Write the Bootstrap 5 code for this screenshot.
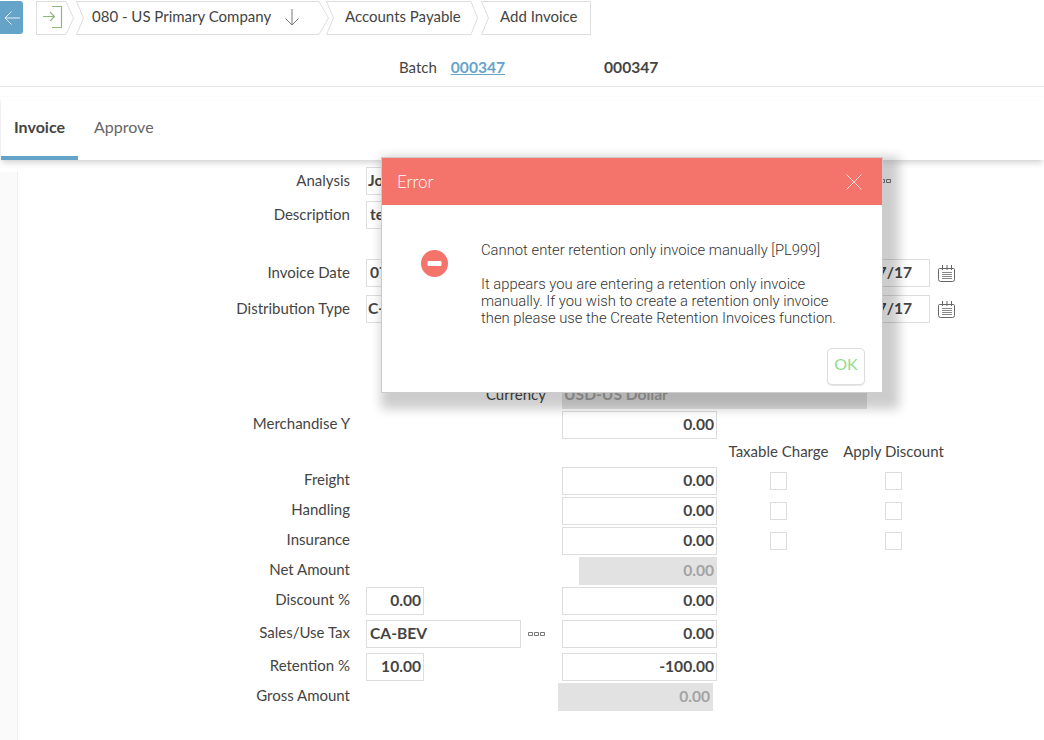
<!DOCTYPE html>
<html lang="en">
<head>
  <meta charset="UTF-8" />
  <meta name="viewport" content="width=device-width, initial-scale=1" />
  <title>Add Invoice</title>
  <link href="https://cdn.jsdelivr.net/npm/bootstrap@5.3.0/dist/css/bootstrap.min.css" rel="stylesheet">
  <style>
    html, body { height: 740px; overflow: hidden; }
    body { background: #fff; color: #444; font-family: Lato, "Liberation Sans", sans-serif; font-size: 15px; position: relative; }

    .topbar { height: 35px; padding-top: 1px; }
    .back-btn { width: 23px; height: 33px; background: #66a3c9; border-radius: 0 3px 3px 0; margin-right: 13px; }
    .crumb { position: relative; height: 34px; line-height: 31px; white-space: nowrap; }
    .crumb svg.shape { position: absolute; left: 0; top: 0; }
    .crumb span, .crumb svg.ico { position: relative; }
    .crumb-home { width: 38px; }
    .crumb-co { width: 253px; margin-left: 2px; padding-left: 16px; }
    .crumb-ap { width: 152px; margin-left: -3px; padding-left: 19px; }
    .crumb-add { width: 110px; margin-left: 3px; padding-left: 19px; }
    .crumb-home svg.ico { display: block; left: 6px; top: 4px; }
    .crumb-co svg.ico { margin-left: 9px; top: -1px; vertical-align: middle; }

    .batch-row { height: 52px; padding: 20px 0 0 399px; border-bottom: 1px solid #e8e8e8; line-height: 24px; }
    .batch-link { margin-left: 14px; color: #66a3c9; font-weight: 700; font-size: 15.6px; }
    .batch-val { margin-left: 99px; font-weight: 700; font-size: 15.6px; }

    .tab-panel { margin: 10px 0 0 1px; height: 63px; background: #fff; box-shadow: 0 4px 6px -1px rgba(0,0,0,.16), 0 0 2px rgba(0,0,0,.04); position: relative; font-size: 16px; }
    .tab-panel .nav-link { height: 63px; padding: 18px 16px 0; color: #666; border-bottom: 4px solid transparent; }
    .tab-panel .nav-link.active { color: #444; font-weight: 700; padding: 18px 13px 0; border-bottom-color: #66a3c9; }

    .rail { width: 18px; margin-top: 12px; height: 568px; background: #fafafa; border-right: 1px solid #eee; flex: none; }
    .form-area { padding-top: 7px; }

    .frow { display: grid; grid-template-columns: 332px 16px 196px 155px 123px 107px; height: 28px; margin-bottom: 2px; align-items: center; }
    .frow-date { grid-template-columns: 332px 16px 100px 364px 100px 8px 18px; }
    .after-6 { margin-bottom: 6px; }
    .after-30 { margin-bottom: 30px; }
    .after-8 { margin-bottom: 8px; }
    .after-58 { margin-bottom: 58px; }
    .after-0 { margin-bottom: 0; }
    .after-5 { margin-bottom: 5px; }

    .flabel { grid-column: 1; text-align: right; margin-top: -3px; }
    .flabel.upper { margin-top: -1px; }
    .fcell { grid-column: 3; display: flex; align-items: center; }
    .famt { grid-column: 4; display: flex; justify-content: flex-end; }
    .cur-amt { grid-column: 4 / span 3; display: flex; }
    .fchk { display: flex; justify-content: center; }
    .fhead { text-align: center; white-space: nowrap; margin-top: -3px; }
    .col-tax { grid-column: 5; }
    .col-disc { grid-column: 6; }

    .fld.form-control { height: 28px; min-height: 0; padding: 0 3px 2px; border: 1px solid #ddd; border-radius: 0; color: #444; font-size: 15.6px; font-weight: 700; box-shadow: none; background: #fff; }
    .fld.tight { padding-left: 1px; }
    .fld.num { text-align: right; padding-right: 2px; }
    .fld.ro { background: #e2e2e2; border-color: #e2e2e2; color: #a3a3a3; }
    .w-58 { width: 58px; }
    .w-155 { width: 155px; }
    .w-138 { width: 138px; }
    .w-100px { width: 100px; }
    .w-300 { width: 300px; }
    .w-501 { width: 501px; flex: none; }
    .w-305 { width: 305px; flex: none; }
    .fld.gross { margin-right: 4px; width: 155px; flex: none; }
    .analysis-cell { grid-column: 3 / span 4; }
    .dots { margin-left: 7px; flex: none; }
    .cur-label { grid-column: 1 / span 3; text-align: right; padding-right: 16px; margin-top: -1px; }
    .chkbox.form-check-input { width: 17px; height: 18px; margin: 0; border: 1px solid #ddd; border-radius: 0; box-shadow: none; }
    .date-end { padding: 0 17px 2px 0 !important; text-align: right; }

    .err-box { position: absolute; left: 381px; top: 157px; width: 502px; height: 236px; border: 1px solid #ccc; border-radius: 0; box-shadow: 8px 8px 10px 8px rgba(0,0,0,.2); display: flex; flex-direction: column; background: #fff; }
    .err-box .modal-header { height: 47px; flex: none; padding: 0 20px 0 15px; background: #f4736b; border: 0; border-radius: 0; color: #fff; font-size: 17px; font-weight: 300; }
    .err-body { flex: 1; padding: 37px 0 0 39px; }
    .err-text { margin-left: 33px; font-family: Roboto, "Liberation Sans", sans-serif; font-weight: 300; font-size: 14.8px; line-height: 17px; color: #333; white-space: nowrap; }
    .err-text p { margin: 0 0 17px; }
    .err-ok.btn { position: absolute; right: 17px; bottom: 7px; width: 38px; height: 37px; padding: 0 0 6px; border: 1px solid #ddd; border-radius: 5px; background: #fff; color: #8fdc8f; font-size: 16px; line-height: 28px; box-shadow: 0 1px 1px rgba(0,0,0,.1); }
    .err-ico { margin-top: 8px; flex: none; }
  </style>
</head>
<body>
  <div class="topbar d-flex">
    <div class="back-btn d-flex align-items-center justify-content-center">
      <svg width="18" height="16" viewBox="0 0 18 16" fill="none" stroke="#fff" stroke-opacity=".85" stroke-width="1"><path d="M17 8H2M8.5 1.5 2 8l6.5 6.5"/></svg>
    </div>
    <div class="crumb crumb-home">
      <svg class="shape" width="38" height="34" fill="#fff" stroke="#ddd"><path d="M.5.5H30L37.5 17 30 33.5H.5Z"/></svg>
      <svg class="ico" width="24" height="24" fill="none" stroke="#8fb87f" stroke-width="1.2"><path d="M1 11.5H12M8 7l4.5 4.5L8 16M10 1.5H19.5V22.5H10" /></svg>
    </div>
    <div class="crumb crumb-co">
      <svg class="shape" width="253" height="34" fill="#fff" stroke="#ddd"><path d="M.5.5H243L252.5 17 243 33.5H.5L7.5 17Z"/></svg>
      <span>080 - US Primary Company</span>
      <svg class="ico" width="16" height="18" fill="none" stroke="#777" stroke-width="1"><path d="M8 1V17M1.5 10.5 8 17l6.5-6.5"/></svg>
    </div>
    <div class="crumb crumb-ap">
      <svg class="shape" width="152" height="34" fill="#fff" stroke="#ddd"><path d="M.5.5H145L151.5 17 145 33.5H.5L7.5 17Z"/></svg>
      <span>Accounts Payable</span>
    </div>
    <div class="crumb crumb-add">
      <svg class="shape" width="110" height="34" fill="#fff" stroke="#ddd"><path d="M.5.5H109.5V33.5H.5L7.5 17Z"/></svg>
      <span>Add Invoice</span>
    </div>
  </div>

  <div class="batch-row">
    <span>Batch</span><a href="#" class="batch-link">000347</a><span class="batch-val">000347</span>
  </div>

  <div class="tab-panel">
    <ul class="nav">
      <li class="nav-item"><a class="nav-link active" href="#">Invoice</a></li>
      <li class="nav-item"><a class="nav-link" href="#">Approve</a></li>
    </ul>
  </div>

  <div class="d-flex">
    <div class="rail"></div>
    <div class="form-area flex-grow-1">
      <div class="frow after-6">
        <div class="flabel upper">Analysis</div>
        <div class="fcell analysis-cell">
          <input class="form-control fld tight w-501" value="Job">
          <svg class="dots" width="18" height="6" fill="none" stroke="#777"><path d="M.5 1.5h4v3h-4zM6.5 1.5h4v3h-4zM12.5 1.5h4v3h-4z"/></svg>
        </div>
      </div>
      <div class="frow after-30">
        <div class="flabel upper">Description</div>
        <div class="fcell analysis-cell"><input class="form-control fld w-300" value="test"></div>
      </div>
      <div class="frow frow-date after-8">
        <div class="flabel upper">Invoice Date</div>
        <div class="fcell"><input class="form-control fld w-100px" value="07/07/17"></div>
        <div></div>
        <input class="form-control fld date-end" value="07/07/17">
        <div></div>
        <svg width="18" height="18" viewBox="0 0 18 18" fill="none" stroke="#666"><path d="M1.5 4.5h14a1 1 0 0 1 1 1v10a2 2 0 0 1-2 2h-12a2 2 0 0 1-2-2v-10a1 1 0 0 1 1-1zM4.5 1v5M9 1v5M13.5 1v5"/><path d="M4 8.5h10M4 10.5h10M4 12.5h10M4 14.5h10" stroke="#888"/></svg>
      </div>
      <div class="frow frow-date after-58">
        <div class="flabel upper">Distribution Type</div>
        <div class="fcell"><input class="form-control fld tight w-100px" value="C-Net"></div>
        <div></div>
        <input class="form-control fld date-end" value="07/07/17">
        <div></div>
        <svg width="18" height="18" viewBox="0 0 18 18" fill="none" stroke="#666"><path d="M1.5 4.5h14a1 1 0 0 1 1 1v10a2 2 0 0 1-2 2h-12a2 2 0 0 1-2-2v-10a1 1 0 0 1 1-1zM4.5 1v5M9 1v5M13.5 1v5"/><path d="M4 8.5h10M4 10.5h10M4 12.5h10M4 14.5h10" stroke="#888"/></svg>
      </div>
      <div class="frow">
        <div class="cur-label">Currency</div>
        <div class="cur-amt"><input class="form-control fld ro tight w-305" value="USD-US Dollar" readonly></div>
      </div>
      <div class="frow after-0">
        <div class="flabel">Merchandise Y</div>
        <div class="famt"><input class="form-control fld num w-155" value="0.00"></div>
      </div>
      <div class="frow after-0">
        <div class="fhead col-tax">Taxable Charge</div>
        <div class="fhead col-disc">Apply Discount</div>
      </div>
      <div class="frow">
        <div class="flabel">Freight</div>
        <div class="famt"><input class="form-control fld num w-155" value="0.00"></div>
        <div class="fchk"><input class="form-check-input chkbox" type="checkbox"></div>
        <div class="fchk"><input class="form-check-input chkbox" type="checkbox"></div>
      </div>
      <div class="frow">
        <div class="flabel">Handling</div>
        <div class="famt"><input class="form-control fld num w-155" value="0.00"></div>
        <div class="fchk"><input class="form-check-input chkbox" type="checkbox"></div>
        <div class="fchk"><input class="form-check-input chkbox" type="checkbox"></div>
      </div>
      <div class="frow">
        <div class="flabel">Insurance</div>
        <div class="famt"><input class="form-control fld num w-155" value="0.00"></div>
        <div class="fchk"><input class="form-check-input chkbox" type="checkbox"></div>
        <div class="fchk"><input class="form-check-input chkbox" type="checkbox"></div>
      </div>
      <div class="frow">
        <div class="flabel">Net Amount</div>
        <div class="famt"><input class="form-control fld num ro w-138" value="0.00" readonly></div>
      </div>
      <div class="frow after-5">
        <div class="flabel">Discount %</div>
        <div class="fcell"><input class="form-control fld num w-58" value="0.00"></div>
        <div class="famt"><input class="form-control fld num w-155" value="0.00"></div>
      </div>
      <div class="frow after-5">
        <div class="flabel">Sales/Use Tax</div>
        <div class="fcell">
          <input class="form-control fld w-155 flex-shrink-0" value="CA-BEV">
          <svg class="dots" width="18" height="6" fill="none" stroke="#777"><path d="M.5 1.5h4v3h-4zM6.5 1.5h4v3h-4zM12.5 1.5h4v3h-4z"/></svg>
        </div>
        <div class="famt"><input class="form-control fld num w-155" value="0.00"></div>
      </div>
      <div class="frow">
        <div class="flabel">Retention %</div>
        <div class="fcell"><input class="form-control fld num w-58" value="10.00"></div>
        <div class="famt"><input class="form-control fld num w-155" value="-100.00"></div>
      </div>
      <div class="frow">
        <div class="flabel">Gross Amount</div>
        <div class="famt"><input class="form-control fld num ro gross" value="0.00" readonly></div>
      </div>
    </div>
  </div>

  <div class="err-box">
    <div class="modal-header d-flex justify-content-between align-items-center">
      <span>Error</span>
      <svg width="16" height="16" fill="none" stroke="#fff" stroke-opacity=".8" stroke-width="1"><path d="M.5.5l15 15M15.5.5l-15 15"/></svg>
    </div>
    <div class="err-body d-flex">
      <svg class="err-ico" width="27" height="27" viewBox="0 0 27 27"><circle cx="13.5" cy="13.5" r="13.5" fill="#f4736b"/><rect x="6.5" y="11" width="14" height="5" rx="1" fill="#fff"/></svg>
      <div class="err-text">
        <p>Cannot enter retention only invoice manually [PL999]</p>
        <p>It appears you are entering a retention only invoice<br>manually. If you wish to create a retention only invoice<br>then please use the Create Retention Invoices function.</p>
      </div>
    </div>
    <button type="button" class="btn err-ok">OK</button>
  </div>

  <script src="https://cdn.jsdelivr.net/npm/bootstrap@5.3.0/dist/js/bootstrap.bundle.min.js" defer></script>
</body>
</html>
